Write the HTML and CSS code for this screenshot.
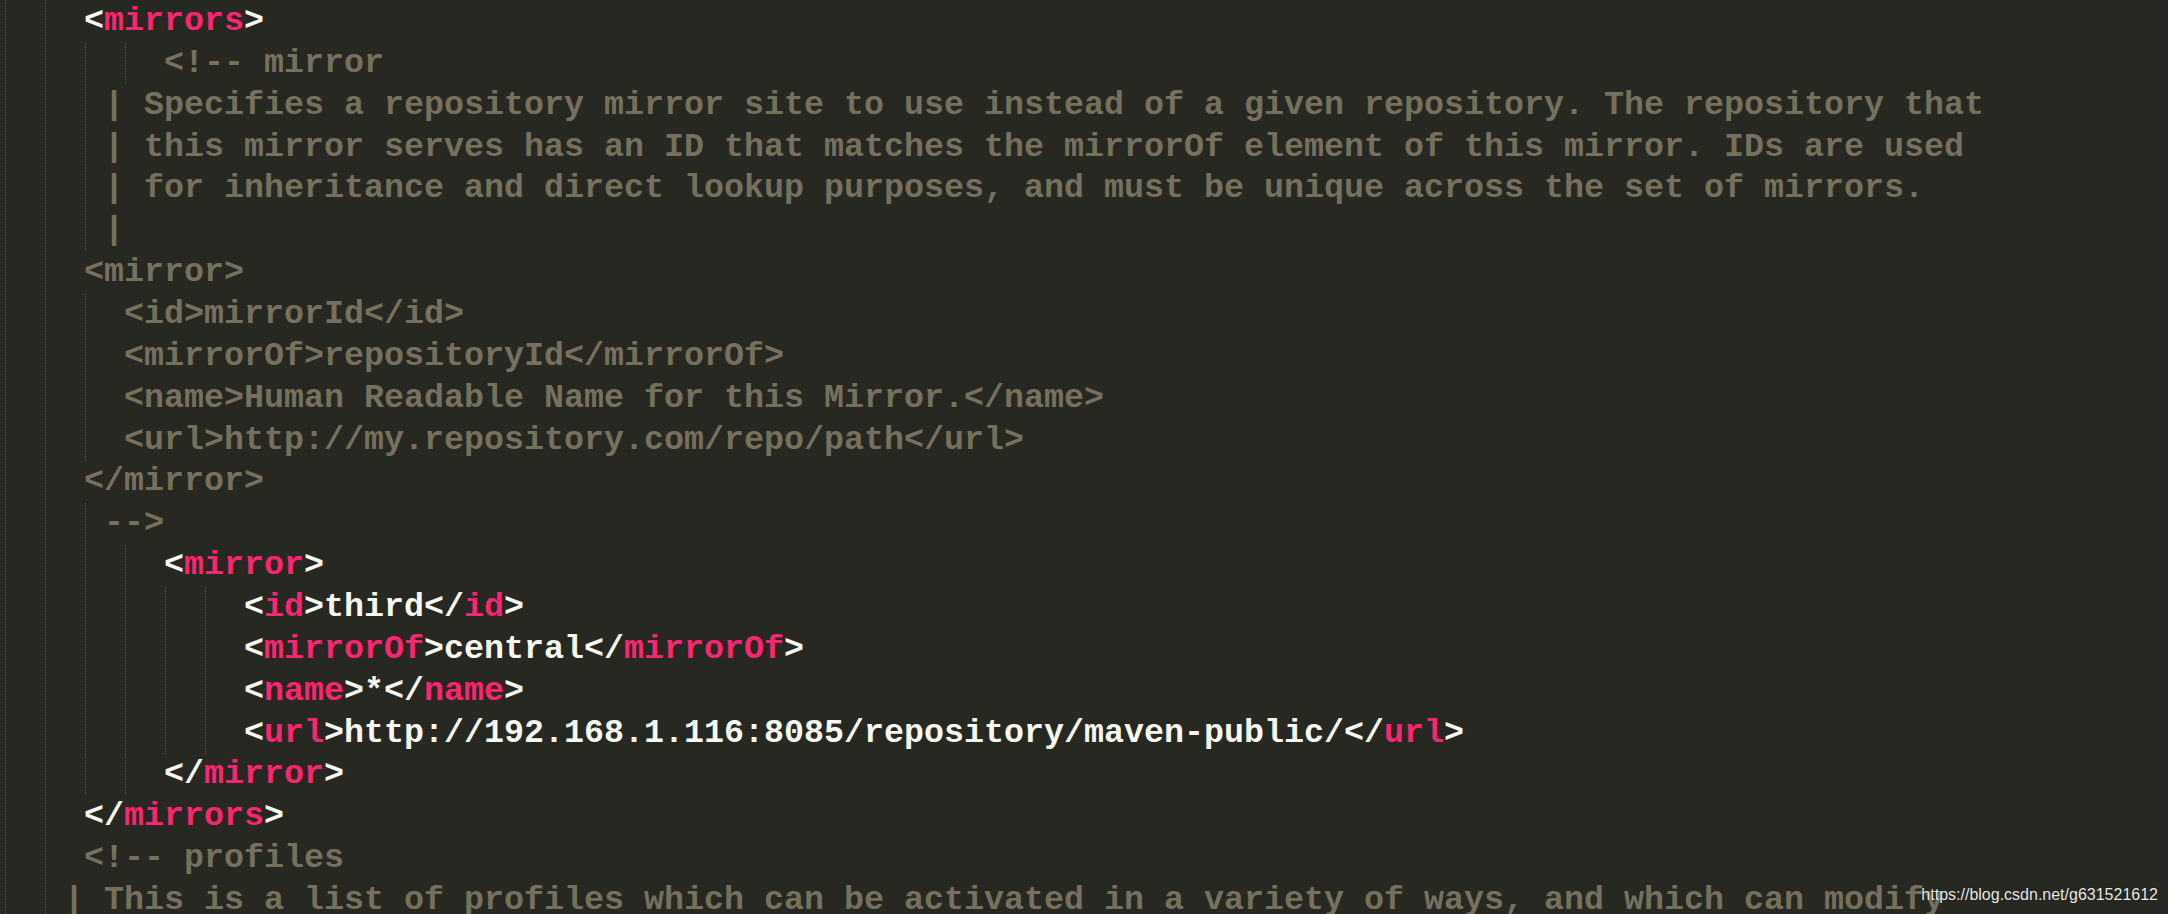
FILE: index.html
```html
<!DOCTYPE html>
<html>
<head>
<meta charset="utf-8">
<title>settings.xml</title>
<link rel="stylesheet" href="styles.css">
</head>
<body>
<div class="editor">
<div class="line"> <span class="p">&lt;</span><span class="t">mirrors</span><span class="p">&gt;</span></div>
<div class="line g2"><span class="c">     &lt;!-- mirror</span></div>
<div class="line g1"><span class="c">  | Specifies a repository mirror site to use instead of a given repository. The repository that</span></div>
<div class="line g1"><span class="c">  | this mirror serves has an ID that matches the mirrorOf element of this mirror. IDs are used</span></div>
<div class="line g1"><span class="c">  | for inheritance and direct lookup purposes, and must be unique across the set of mirrors.</span></div>
<div class="line g1"><span class="c">  |</span></div>
<div class="line"><span class="c"> &lt;mirror&gt;</span></div>
<div class="line g1"><span class="c">   &lt;id&gt;mirrorId&lt;/id&gt;</span></div>
<div class="line g1"><span class="c">   &lt;mirrorOf&gt;repositoryId&lt;/mirrorOf&gt;</span></div>
<div class="line g1"><span class="c">   &lt;name&gt;Human Readable Name for this Mirror.&lt;/name&gt;</span></div>
<div class="line g1"><span class="c">   &lt;url&gt;http://my.repository.com/repo/path&lt;/url&gt;</span></div>
<div class="line"><span class="c"> &lt;/mirror&gt;</span></div>
<div class="line g1"><span class="c">  --&gt;</span></div>
<div class="line g2">     <span class="p">&lt;</span><span class="t">mirror</span><span class="p">&gt;</span></div>
<div class="line g4">         <span class="p">&lt;</span><span class="t">id</span><span class="p">&gt;third&lt;/</span><span class="t">id</span><span class="p">&gt;</span></div>
<div class="line g4">         <span class="p">&lt;</span><span class="t">mirrorOf</span><span class="p">&gt;central&lt;/</span><span class="t">mirrorOf</span><span class="p">&gt;</span></div>
<div class="line g4">         <span class="p">&lt;</span><span class="t">name</span><span class="p">&gt;*&lt;/</span><span class="t">name</span><span class="p">&gt;</span></div>
<div class="line g4">         <span class="p">&lt;</span><span class="t">url</span><span class="p">&gt;http://192.168.1.116:8085/repository/maven-public/&lt;/</span><span class="t">url</span><span class="p">&gt;</span></div>
<div class="line g2">     <span class="p">&lt;/</span><span class="t">mirror</span><span class="p">&gt;</span></div>
<div class="line"> <span class="p">&lt;/</span><span class="t">mirrors</span><span class="p">&gt;</span></div>
<div class="line"><span class="c"> &lt;!-- profiles</span></div>
<div class="line"><span class="c">| This is a list of profiles which can be activated in a variety of ways, and which can modify</span></div>
</div>
<div class="watermark">https://blog.csdn.net/g631521612</div>
</body>
</html>
```
FILE: styles.css
```css
:root {
  --dot: repeating-linear-gradient(to bottom, #54544c 0 1px, transparent 1px 2px);
}

html, body {
  margin: 0;
  padding: 0;
  height: 100%;
  overflow: hidden;
  background: #272822;
}

body {
  position: relative;
}

.editor {
  height: 100%;
  padding-top: 1px;
  box-sizing: border-box;
  background-color: #272822;
  background-image: var(--dot), var(--dot);
  background-size: 1px 100%, 1px 100%;
  background-repeat: no-repeat;
  background-position: 5px 0, 45px 0;
  font-family: "Liberation Mono", "Courier New", monospace;
  font-weight: bold;
  font-size: 33.33px;
  line-height: 41.87px;
  color: #f8f8f2;
}

.line {
  height: 41.87px;
  padding-left: 64px;
  white-space: pre;
  background-repeat: no-repeat;
}

.g1 {
  background-image: var(--dot);
  background-size: 1px 100%;
  background-position: 85px 0;
}

.g2 {
  background-image: var(--dot), var(--dot);
  background-size: 1px 100%, 1px 100%;
  background-position: 85px 0, 125px 0;
}

.g4 {
  background-image: var(--dot), var(--dot), var(--dot), var(--dot);
  background-size: 1px 100%, 1px 100%, 1px 100%, 1px 100%;
  background-position: 85px 0, 125px 0, 165px 0, 205px 0;
}

.p {
  color: #f8f8f2;
}

.t {
  color: #f92672;
}

.c {
  color: #75715e;
}

.watermark {
  position: absolute;
  right: 10px;
  bottom: 10px;
  font-family: "Liberation Sans", Arial, sans-serif;
  font-size: 16px;
  font-weight: normal;
  color: #ececec;
  text-shadow: 0 0 1px #000;
}
```
